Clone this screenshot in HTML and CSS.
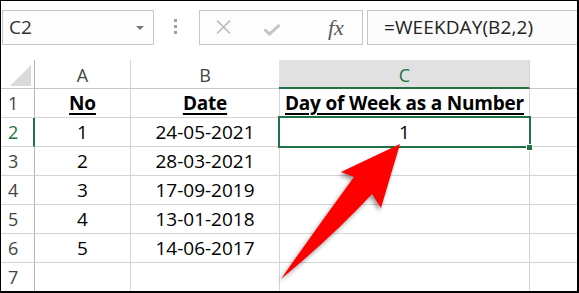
FILE: index.html
```html
<!DOCTYPE html>
<html>
<head>
<meta charset="utf-8">
<link rel="stylesheet" href="styles.css">
</head>
<body>
<div class="frame">
  <div class="toolbar">
    <div class="namebox">
      <span class="name">C2</span>
      <span class="caret"></span>
    </div>
    <div class="dots"><i></i><i></i><i></i></div>
    <div class="fnbox">
      <svg class="ico-x" width="15" height="16" viewBox="0 0 15 16"><path d="M1 1.5 L14 14.5 M14 1.5 L1 14.5" stroke="#b9b9b9" stroke-width="1.6" fill="none"/></svg>
      <svg class="ico-check" width="18" height="12" viewBox="0 0 18 12"><path d="M1.5 5.5 L6.5 10 L16.5 1" stroke="#c4c4c4" stroke-width="3" fill="none" stroke-linejoin="miter"/></svg>
      <span class="fx">fx</span>
    </div>
    <div class="formula">=WEEKDAY(B2,2)</div>
  </div>
  <div class="sheet">
    <div class="corner"><span class="tri"></span></div>
    <div class="colhead">A</div>
    <div class="colhead">B</div>
    <div class="colhead sel">C</div>
    <div class="colhead last"></div>

    <div class="rowhead">1</div>
    <div class="cell hdr"><u>No</u></div>
    <div class="cell hdr"><u>Date</u></div>
    <div class="cell hdr"><u>Day of Week as a Number</u></div>
    <div class="cell last"></div>

    <div class="rowhead sel">2</div>
    <div class="cell">1</div>
    <div class="cell">24-05-2021</div>
    <div class="cell active">1<span class="handle"></span></div>
    <div class="cell last"></div>

    <div class="rowhead">3</div>
    <div class="cell">2</div>
    <div class="cell">28-03-2021</div>
    <div class="cell"></div>
    <div class="cell last"></div>

    <div class="rowhead">4</div>
    <div class="cell">3</div>
    <div class="cell">17-09-2019</div>
    <div class="cell"></div>
    <div class="cell last"></div>

    <div class="rowhead">5</div>
    <div class="cell">4</div>
    <div class="cell">13-01-2018</div>
    <div class="cell"></div>
    <div class="cell last"></div>

    <div class="rowhead">6</div>
    <div class="cell">5</div>
    <div class="cell">14-06-2017</div>
    <div class="cell"></div>
    <div class="cell last"></div>

    <div class="rowhead lastrow">7</div>
    <div class="cell lastrow"></div>
    <div class="cell lastrow"></div>
    <div class="cell lastrow"></div>
    <div class="cell last lastrow"></div>
  </div>
  <svg class="arrow" width="579" height="293" viewBox="0 0 579 293">
    <path d="M400 144 L341 172 L354 177 Q318 226 281 279 Q333 236 372 194 L381 208 Z" fill="#ff0000"/>
  </svg>
</div>
</body>
</html>
```

FILE: styles.css
```css
* { box-sizing: border-box; }
html, body { margin: 0; padding: 0; background: #fff; }
.frame {
  position: relative;
  width: 579px;
  height: 293px;
  border-top: 1px solid #000;
  border-left: 1px solid #000;
  border-right: 2px solid #000;
  border-bottom: 2px solid #000;
  overflow: hidden;
  font-family: "Open Sans", "Noto Sans", sans-serif;
  background: #fff;
}
.toolbar {
  height: 59px;
  display: flex;
  align-items: flex-start;
  padding-top: 9px;
}
.namebox {
  margin-left: 1px;
  width: 152px;
  height: 35px;
  border: 1px solid #c6c6c6;
  background: #fdfdfd;
  display: flex;
  align-items: center;
  justify-content: space-between;
  padding: 0 9px 0 6px;
}
.name { font-size: 19px; color: #333; line-height: 1; }
.caret {
  width: 0; height: 0;
  border-left: 4px solid transparent;
  border-right: 4px solid transparent;
  border-top: 4px solid #777;
  margin-top: 1px;
}
.dots {
  margin-left: 20px;
  margin-top: 9px;
  display: flex;
  flex-direction: column;
  gap: 3px;
}
.dots i { display: block; width: 3px; height: 3px; background: #a0a0a0; }
.fnbox {
  margin-left: 22px;
  width: 164px;
  height: 35px;
  border: 1px solid #c6c6c6;
  background: #fdfdfd;
  display: flex;
  align-items: flex-start;
  padding-left: 16px;
}
.ico-x { margin-top: 8px; }
.ico-check { margin-top: 13px; margin-left: 32px; }
.fx {
  margin-left: 47px;
  margin-top: 3px;
  font-family: "Liberation Serif", serif;
  font-style: italic;
  font-size: 22px;
  color: #5a5a5a;
  line-height: 28px;
}
.formula {
  margin-left: 4px;
  flex: 1;
  height: 35px;
  border: 1px solid #c6c6c6;
  border-right: none;
  background: #fbfbfb;
  padding-left: 16px;
  font-size: 19px;
  line-height: 33px;
  color: #222;
  letter-spacing: 0.1px;
}
.sheet {
  display: grid;
  grid-template-columns: 34px 96px 149px 250px 1fr;
  grid-auto-rows: 29px;
}
.sheet > div {
  border-right: 1px solid #d4d4d4;
  border-bottom: 1px solid #d4d4d4;
}
.sheet > .last { border-right: none; }
.sheet > .lastrow { border-bottom: none; }
.corner {
  position: relative;
  border-right-color: #b5b5b5 !important;
  border-bottom-color: #c8c8c8 !important;
}
.tri {
  position: absolute;
  left: 9px;
  top: 5px;
  width: 0; height: 0;
  border-left: 21px solid transparent;
  border-bottom: 21px solid #dadada;
}
.colhead {
  text-align: center;
  font-size: 18px;
  line-height: 28px;
  padding-top: 1px;
  color: #444;
  border-bottom-color: #c8c8c8 !important;
}
.colhead.sel {
  background: #e1e1e1;
  color: #217346;
  border-bottom: 2px solid #217346 !important;
  margin-left: -1px;
  padding-left: 1px;
}
.rowhead {
  font-size: 18px;
  line-height: 28px;
  padding-left: 7px;
  color: #444;
  border-right-color: #b5b5b5 !important;
}
.rowhead.sel {
  color: #217346;
  border-right: 2px solid #217346 !important;
}
.cell {
  text-align: center;
  font-size: 19px;
  line-height: 28px;
  color: #000;
  white-space: nowrap;
}
.cell.hdr { font-weight: 700; letter-spacing: -0.2px; }
.cell.hdr u {
  text-decoration-thickness: 2px;
  text-underline-offset: 3px;
}
.cell.active { position: relative; }
.cell.active::after {
  content: "";
  position: absolute;
  top: -2px;
  left: -2px;
  right: -2px;
  bottom: -2px;
  border: 2px solid #217346;
}
.handle {
  position: absolute;
  right: -4px;
  bottom: -5px;
  width: 7px;
  height: 7px;
  background: #217346;
  border: 1px solid #fff;
  z-index: 2;
}
.arrow {
  position: absolute;
  left: -1px;
  top: -1px;
  pointer-events: none;
  filter: drop-shadow(-2px 3px 2px rgba(0,0,0,0.4));
}
```
